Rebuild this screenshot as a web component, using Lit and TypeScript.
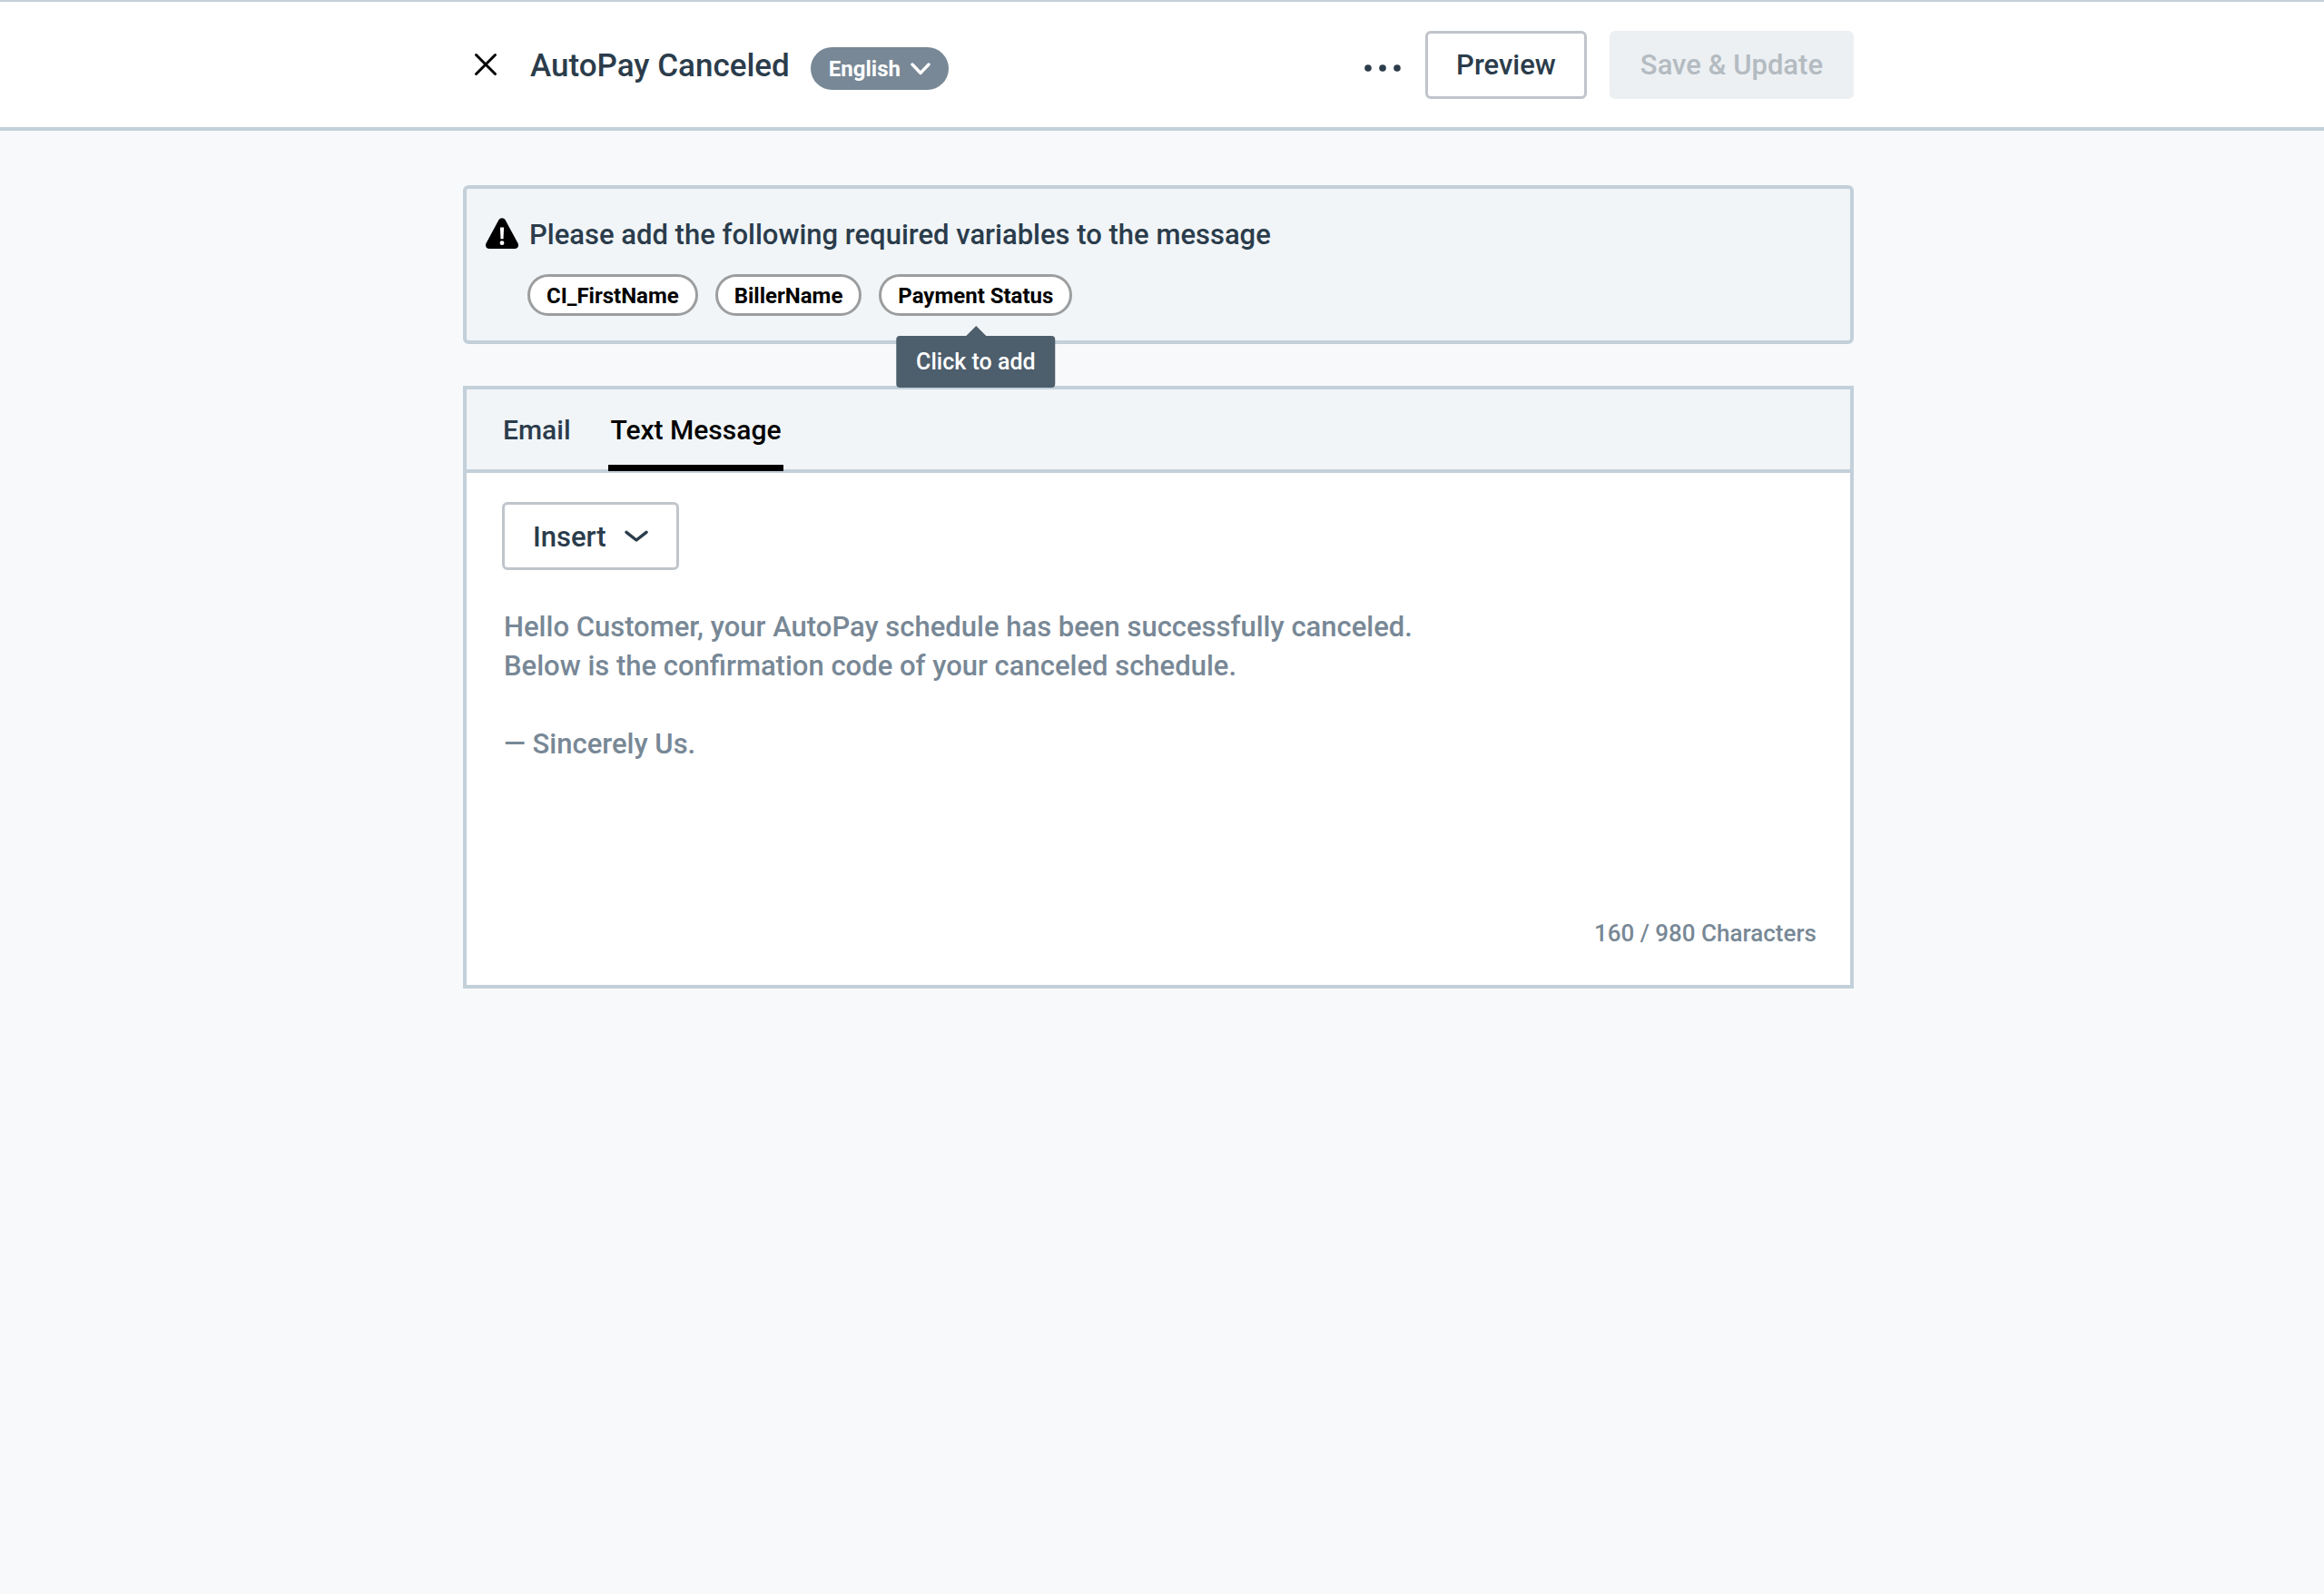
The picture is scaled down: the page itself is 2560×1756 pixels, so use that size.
import { LitElement, html, css } from "lit";
import { customElement, property, state } from "lit/decorators.js";
import { classMap } from "lit/directives/class-map.js";

const controls = css`
  *, *::before, *::after { box-sizing: border-box; }
  button, select, textarea { font: inherit; color: inherit; margin: 0; }
  button, select { cursor: pointer; }
  svg { display: block; flex: none; }
  .button {
    display: inline-flex;
    align-items: center;
    gap: 20px;
    height: 75px;
    padding: 1px 31px 0;
    border: 3px solid #bfc5cb;
    border-radius: 6px;
    background: #fff;
    color: #2b3c4b;
    font-size: 31px;
    font-weight: 480;
    white-space: nowrap;
  }
  .button:disabled {
    border-color: #ecf0f3;
    background: #ecf0f3;
    color: #b4bbc1;
    cursor: default;
  }
`;

@customElement("editor-header")
class EditorHeader extends LitElement {
  @property() heading = "";

  static styles = [controls, css`
    :host {
      display: block;
      border-top: 2px solid #c3d0da;
      border-bottom: 4px solid #c3d0da;
      background: #fff;
      padding-right: 8px;
    }
    .bar {
      display: flex;
      align-items: center;
      justify-content: space-between;
      width: min(1532px, 100% - 48px);
      min-height: 138px;
      margin: 0 auto;
    }
    .lead, .actions { display: flex; align-items: center; }
    .lead { gap: 24px; }
    .icon-button {
      display: grid;
      place-items: center;
      height: 50px;
      padding: 0;
      border: 0;
      background: none;
      color: #2b3c4b;
    }
    .close { width: 50px; color: #000; }
    .more { place-items: end center; padding-bottom: 17px; }
    .heading { display: flex; align-items: baseline; gap: 23px; padding-top: 3px; }
    h1 {
      margin: 0;
      color: #2b3c4b;
      font-size: 35px;
      font-weight: 480;
      line-height: 60px;
      white-space: nowrap;
    }
    .language {
      display: inline-flex;
      align-items: center;
      gap: 10px;
      height: 47px;
      padding: 0 20px;
      border-radius: 24px;
      background: #788896;
      color: #fff;
      font-size: 24px;
      font-weight: 700;
    }
    .language select {
      appearance: none;
      padding: 0;
      border: 0;
      background: none;
      line-height: 32px;
    }
    .actions { gap: 25px; }
  `];

  render() {
    return html`
      <div class="bar">
        <div class="lead">
          <button class="icon-button close" aria-label="Close">
            <svg width="26" height="26" viewBox="0 0 26 26" fill="none" stroke="currentColor" stroke-width="3" stroke-linecap="round">
              <path d="M2.5 2.5 23.5 23.5M23.5 2.5 2.5 23.5" />
            </svg>
          </button>
          <div class="heading">
            <h1>${this.heading}</h1>
            <label class="language">
              <select aria-label="Language"><option>English</option></select>
              <svg width="22" height="14" viewBox="0 0 22 14" fill="none" stroke="currentColor" stroke-width="3.4" stroke-linecap="round" stroke-linejoin="round">
                <path d="M2 2 11 11.5 20 2" />
              </svg>
            </label>
          </div>
        </div>
        <div class="actions">
          <button class="icon-button more" aria-label="More options">
            <svg width="44" height="8" viewBox="0 0 44 8" fill="currentColor">
              <circle cx="6" cy="4" r="3.8" /><circle cx="22" cy="4" r="3.8" /><circle cx="38" cy="4" r="3.8" />
            </svg>
          </button>
          <button class="button">Preview</button>
          <button class="button" disabled>Save &amp; Update</button>
        </div>
      </div>
    `;
  }
}

@customElement("required-variables")
class RequiredVariables extends LitElement {
  @property({ attribute: false }) names: string[] = [];
  @state() private hinted = "Payment Status";

  static styles = [controls, css`
    :host {
      display: flex;
      gap: 10px;
      padding: 28px 21px 27px;
      border: 4px solid #c3d0da;
      border-radius: 6px;
      background: #f1f5f8;
    }
    .warning { margin-top: 4px; }
    .content { display: flex; flex-direction: column; gap: 20px; min-width: 0; }
    p {
      margin: 0;
      padding-left: 2px;
      color: #2b3c4b;
      font-size: 31px;
      font-weight: 480;
      line-height: 46px;
    }
    .chips { display: flex; flex-wrap: wrap; gap: 19px; }
    .slot { position: relative; }
    .chip {
      display: block;
      height: 46px;
      padding: 1px 18px 0;
      border: 3px solid #9b9d9e;
      border-radius: 23px;
      background: #fff;
      color: #000;
      font-size: 24px;
      font-weight: 700;
      white-space: nowrap;
    }
    .tip {
      position: absolute;
      z-index: 1;
      top: calc(100% + 22px);
      left: 50%;
      transform: translateX(-50%);
      padding: 0 22px;
      border-radius: 4px;
      background: #4d5e6c;
      color: #fff;
      font-size: 25px;
      font-weight: 500;
      line-height: 57px;
      white-space: nowrap;
    }
    .tip::before {
      content: "";
      position: absolute;
      bottom: 100%;
      left: calc(50% - 11px);
      border: 11px solid transparent;
      border-top: 0;
      border-bottom-color: #4d5e6c;
    }
  `];

  render() {
    return html`
      <svg class="warning" width="36" height="34" viewBox="0 0 36 34">
        <path fill="#000" d="M14.4 2.3C15.8-.5 20.2-.5 21.6 2.3L35.4 27.8C37 30.8 35.3 34 32 34H4C.7 34-1 30.8.6 27.8Z" />
        <path fill="#fff" d="M15.9 10.5H20.1L19.5 23.2H16.5Z" />
        <circle cx="18" cy="27.7" r="2.4" fill="#fff" />
      </svg>
      <div class="content">
        <p>Please add the following required variables to the message</p>
        <div class="chips">
          ${this.names.map((name) => html`
            <div class="slot">
              <button class="chip" @mouseenter=${() => (this.hinted = name)}>${name}</button>
              ${name === this.hinted ? html`<div class="tip" role="tooltip">Click to add</div>` : null}
            </div>
          `)}
        </div>
      </div>
    `;
  }
}

@customElement("message-editor")
class MessageEditor extends LitElement {
  @property() message = "";
  @state() private active = "Text Message";

  static styles = [controls, css`
    :host { display: block; border: 4px solid #c3d0da; background: #fff; }
    .tabs {
      display: flex;
      gap: 38px;
      height: 92px;
      padding: 0 37px;
      border-bottom: 4px solid #c3d0da;
      background: #f1f5f8;
    }
    .tab {
      height: 90px;
      padding: 0 3px;
      border: 0 solid transparent;
      border-width: 5px 0 7px;
      background: none;
      color: #2b3c4b;
      font-size: 30px;
      font-weight: 480;
      white-space: nowrap;
    }
    .tab.active { border-bottom-color: #000; color: #000; }
    .body {
      display: flex;
      flex-direction: column;
      align-items: flex-start;
      padding: 32px 37px 40px 39px;
      color: #788896;
      font-weight: 480;
    }
    textarea {
      width: 100%;
      margin: 41px 0;
      padding: 0 2px;
      border: 0;
      outline: 0;
      background: none;
      resize: none;
      font-size: 31px;
      line-height: 43px;
      overflow: hidden;
    }
    .count { align-self: flex-end; font-size: 26px; line-height: 34px; }
  `];

  render() {
    return html`
      <div class="tabs" role="tablist">
        ${["Email", "Text Message"].map((name) => html`
          <button
            role="tab"
            class=${classMap({ tab: true, active: name === this.active })}
            aria-selected=${name === this.active}
            @click=${() => (this.active = name)}
          >${name}</button>
        `)}
      </div>
      <div class="body">
        <button class="button" aria-haspopup="menu">
          Insert
          <svg width="26" height="14" viewBox="0 0 26 14" fill="none" stroke="currentColor" stroke-width="3.4" stroke-linecap="round" stroke-linejoin="round">
            <path d="M2 2.3 13 11 24 2.3" />
          </svg>
        </button>
        <textarea rows="7" aria-label="Message" .value=${this.message}></textarea>
        <div class="count">160 / 980 Characters</div>
      </div>
    `;
  }
}

const MESSAGE = `Hello Customer, your AutoPay schedule has been successfully canceled.
Below is the confirmation code of your canceled schedule.

— Sincerely Us.`;

@customElement("app-root")
class AppRoot extends LitElement {
  static styles = css`
    :host {
      display: block;
      min-height: 100vh;
      background: #f8f9fb;
      font-family: Roboto, "Liberation Sans", sans-serif;
    }
    main { padding: 60px 8px 60px 0; }
    .column {
      display: flex;
      flex-direction: column;
      gap: 46px;
      width: min(1532px, 100% - 48px);
      margin: 0 auto;
    }
  `;

  render() {
    return html`
      <editor-header heading="AutoPay Canceled"></editor-header>
      <main>
        <div class="column">
          <required-variables .names=${["CI_FirstName", "BillerName", "Payment Status"]}></required-variables>
          <message-editor .message=${MESSAGE}></message-editor>
        </div>
      </main>
    `;
  }
}
